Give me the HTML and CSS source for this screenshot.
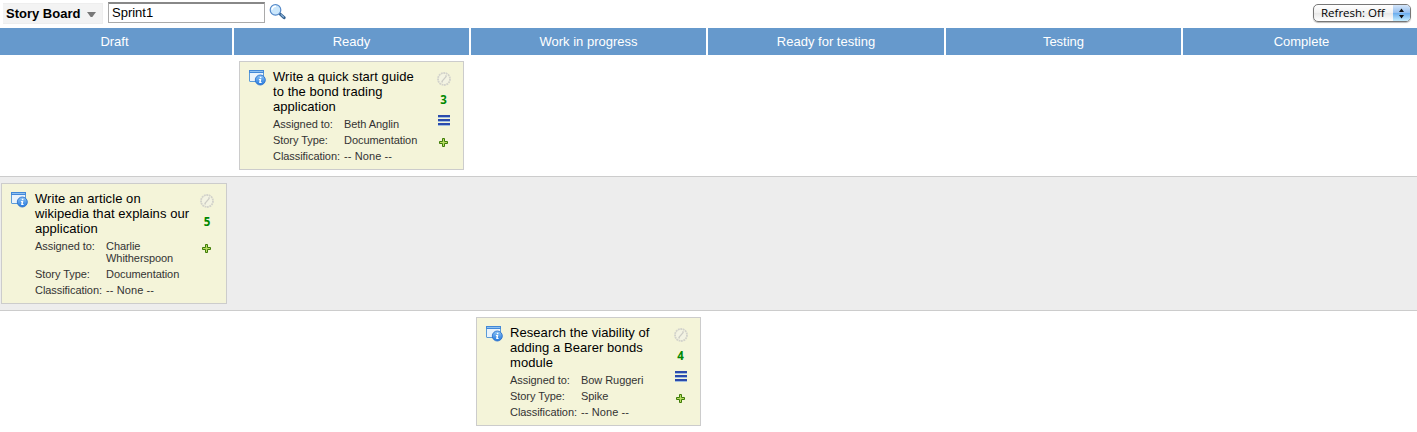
FILE: index.html
```html
<!DOCTYPE html>
<html lang="en">
<head>
<meta charset="utf-8">
<title>Story Board</title>
<link rel="stylesheet" href="styles.css">
</head>
<body>
<svg width="0" height="0" class="defs">
  <defs>
    <linearGradient id="blue" x1="0" y1="0" x2="0" y2="1"><stop offset="0" stop-color="#8dc4f5"/><stop offset="1" stop-color="#2277dd"/></linearGradient>
    <symbol id="story" viewBox="0 0 17 17">
      <rect x=".5" y="1.5" width="14" height="11" rx=".5" fill="#e9f3fc" stroke="#5b9bd8"/>
      <path d="M0 1h15v3H0z" fill="#4288d8"/><path d="M1 2h13v1H1z" fill="#8fc1f0"/>
      <circle cx="11.3" cy="11" r="5" fill="url(#blue)" stroke="#2b70cc" stroke-width=".9"/>
      <path d="M10.8 7.7h1.6v1.5h-1.6zM9.9 10h2.4l-.5 3.1h.8v1h-2.5l.5-3.1h-.7z" fill="#fff"/>
    </symbol>
    <symbol id="blocked" viewBox="0 0 14 14">
      <circle cx="7" cy="7" r="5.9" fill="none" stroke="#d2d2cc" stroke-width="2" stroke-dasharray="1.8 .6"/>
      <circle cx="7" cy="7" r="5" fill="#f3f3e3"/>
      <path d="M4.7 9.7l4.6-5.4M4.4 9.9h1.5M8.3 4h1.4" stroke="#cdcdc5" stroke-width="1.3" fill="none"/>
    </symbol>
    <symbol id="tasks" viewBox="0 0 12 11">
      <path d="M0 0h12v2H0zM0 4h12v2H0zM0 8h12v2H0z" fill="#2b4bac"/>
      <path d="M0 2h12v1H0zM0 6h12v1H0zM0 10h12v1H0z" fill="#a0bee0"/>
    </symbol>
    <symbol id="add" viewBox="0 0 9 9">
      <path d="M3.5.5h2v3h3v2h-3v3h-2v-3h-3v-2h3z" fill="#b8dc60" stroke="#3e7c08"/>
    </symbol>
  </defs>
</svg>

<header class="toolbar">
  <div class="board-menu">Story Board
    <svg class="caret" width="9" height="5" viewBox="0 0 9 5"><path d="M0 0h9L5.3 5H3.7z" fill="#777"/></svg>
  </div>
  <div class="search-field">Sprint1</div>
  <svg class="search-icon" width="17" height="17" viewBox="0 0 17 17">
    <path d="M10.5 10.5l4.6 4.2" stroke="#35618f" stroke-width="3" stroke-linecap="round"/>
    <path d="M11.8 11.4l3.1 2.8" stroke="#8db5dd" stroke-width="1.2"/>
    <circle cx="6.5" cy="6.9" r="5.3" fill="#cbe7fc" stroke="#5589c9" stroke-width="1.2"/>
    <path d="M3 6.7a3.5 3.5 0 0 1 4-3.3" stroke="#fff" stroke-width="1.5" fill="none"/>
  </svg>
  <div class="refresh"><span class="refresh-label">Refresh: Off</span><span class="stepper"><svg width="7" height="11" viewBox="0 0 7 11"><path d="M3.5 0.5L6 4H1zM3.5 10.5L6 7H1z" fill="#111"/></svg></span></div>
</header>

<div class="lanes heads">
  <div>Draft</div><div>Ready</div><div>Work in progress</div><div>Ready for testing</div><div>Testing</div><div>Complete</div>
</div>

<main>
  <section class="lanes row">
    <article class="card ready">
      <svg class="story-icon"><use href="#story"/></svg>
      <div class="body">
        <h2>Write a quick start guide<br>to the bond trading<br>application</h2>
        <dl><dt>Assigned to:</dt><dd>Beth Anglin</dd><dt>Story Type:</dt><dd>Documentation</dd><dt>Classification:</dt><dd class="none">-- None --</dd></dl>
      </div>
      <div class="side"><svg class="blocked"><use href="#blocked"/></svg><b>3</b><svg class="tasks"><use href="#tasks"/></svg><svg class="add"><use href="#add"/></svg></div>
    </article>
  </section>
  <section class="lanes row shaded">
    <article class="card draft">
      <svg class="story-icon"><use href="#story"/></svg>
      <div class="body">
        <h2>Write an article on<br>wikipedia that explains our<br>application</h2>
        <dl><dt>Assigned to:</dt><dd>Charlie<br>Whitherspoon</dd><dt>Story Type:</dt><dd>Documentation</dd><dt>Classification:</dt><dd class="none">-- None --</dd></dl>
      </div>
      <div class="side"><svg class="blocked"><use href="#blocked"/></svg><b>5</b><svg class="add no-tasks"><use href="#add"/></svg></div>
    </article>
  </section>
  <section class="lanes row last">
    <article class="card progress">
      <svg class="story-icon"><use href="#story"/></svg>
      <div class="body">
        <h2>Research the viability of<br>adding a Bearer bonds<br>module</h2>
        <dl><dt>Assigned to:</dt><dd>Bow Ruggeri</dd><dt>Story Type:</dt><dd>Spike</dd><dt>Classification:</dt><dd class="none">-- None --</dd></dl>
      </div>
      <div class="side"><svg class="blocked"><use href="#blocked"/></svg><b>4</b><svg class="tasks"><use href="#tasks"/></svg><svg class="add"><use href="#add"/></svg></div>
    </article>
  </section>
</main>
</body>
</html>
```
FILE: styles.css
```css
* { box-sizing: border-box; }
body { margin: 0; background: #fff; font: 13px/15px "Liberation Sans", Arial, sans-serif; color: #000; overflow: hidden; }
svg { display: block; flex: none; }
.defs { position: absolute; }

.toolbar { display: flex; align-items: flex-start; height: 28px; padding: 2px 6px 0 3px; }
.board-menu { display: flex; align-items: center; width: 100px; height: 21px; margin-top: 1px; padding: 0 6px 1px 3px; background: #f3f3f3; border: 1px solid #eee; border-left: 0; font-weight: bold; white-space: nowrap; }
.caret { margin: 3px 0 0 auto; }
.search-field { width: 157px; height: 21px; margin-left: 5px; padding: 1px 3px; border: 1px solid #aaa; border-top: 2px solid #888; line-height: 15px; }
.search-icon { margin: 1px 0 0 4px; }
.refresh { display: flex; width: 98px; height: 18px; margin: 2px 0 0 auto; border: 1px solid #777; border-radius: 5px; overflow: hidden; background: linear-gradient(#fff, #f1f1f1 50%, #e8e8e8 52%, #fff); box-shadow: 0 1px 1px #bbb; }
.refresh-label { flex: 1; padding-left: 7px; font: 11.5px/16px "Open Sans", sans-serif; white-space: nowrap; }
.stepper { display: flex; align-items: center; justify-content: center; width: 17px; background: linear-gradient(#d5e6fa, #95c0f0 48%, #6caeee 52%, #c5edff); }

.lanes { display: grid; grid-template-columns: 232px 235px 235px 236px 235px 234px; column-gap: 2px; }
.heads { height: 27px; line-height: 27px; color: #fff; text-align: center; }
.heads div { background: #69c; }
.heads div:first-child { padding-right: 3px; }
.heads div:last-child { padding-left: 3px; }

.row { padding: 6px 0; border-bottom: 1px solid #ccc; align-items: start; }
.shaded { background: #ededed; }
.last { border-bottom: 0; }
.card { display: flex; align-items: flex-start; width: 225px; margin-left: 5px; padding: 7px 0 7px 9px; background: #f4f4d9; border: 1px solid #ccc; }
.card.draft { grid-column: 1; width: 226px; margin-left: 1px; }
.card.ready { grid-column: 2; }
.card.progress { grid-column: 3; }
.story-icon { width: 17px; height: 17px; }
.body { width: 160px; margin-left: 7px; }
h2 { margin: 0 0 4px; font-size: 13px; line-height: 15px; font-weight: normal; letter-spacing: .06px; white-space: nowrap; }
dl { display: grid; grid-template-columns: 71px 1fr; row-gap: 4px; margin: 0; font-size: 11px; line-height: 12px; letter-spacing: -.06px; color: #333; white-space: nowrap; }
dd { margin: 0; }
.none { letter-spacing: .1px; }
.side { display: flex; flex-direction: column; align-items: center; width: 21px; padding-top: 3px; }
.draft .side { width: 20px; margin-left: 2px; }
.blocked { width: 14px; height: 14px; }
.side b { margin: 7px 0 1px; font: bold 11.5px/14px "Open Sans", sans-serif; color: #080; }
.tasks { width: 12px; height: 11px; margin-top: 7px; }
.add { width: 9px; height: 9px; margin-top: 12px; }
.add.no-tasks { margin: 14px 1px 0 0; }
```
